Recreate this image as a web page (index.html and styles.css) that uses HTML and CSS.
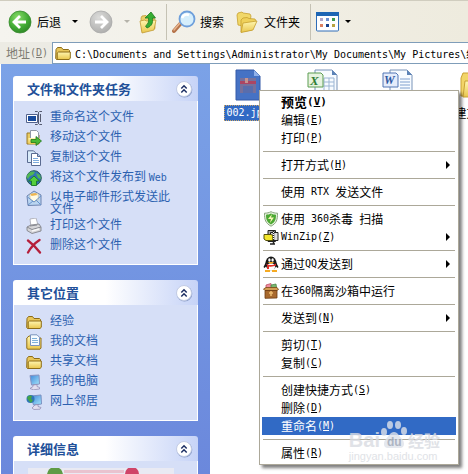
FILE: index.html
```html
<!DOCTYPE html>
<html lang="zh-CN">
<head>
    <meta charset="UTF-8">
    <meta name="viewport" content="width=device-width, initial-scale=1.0">
    <title>经验</title>
    <link rel="stylesheet" href="styles.css">
</head>
<body>
    <!-- shared icons -->
    <svg class="defs" width="0" height="0">
        <defs>
            <linearGradient id="yellow" x1="0" y1="0" x2="0" y2="1">
                <stop offset="0" stop-color="#fff6b0"/>
                <stop offset="1" stop-color="#e9c64c"/>
            </linearGradient>
            <radialGradient id="green" cx="0.4" cy="0.3" r="0.8">
                <stop offset="0" stop-color="#8ade6a"/>
                <stop offset="0.6" stop-color="#3fa833"/>
                <stop offset="1" stop-color="#2a7d24"/>
            </radialGradient>
            <radialGradient id="gray" cx="0.4" cy="0.3" r="0.8">
                <stop offset="0" stop-color="#dcdcda"/>
                <stop offset="1" stop-color="#a9a9a8"/>
            </radialGradient>
            <linearGradient id="screen" x1="0" y1="0" x2="1" y2="1">
                <stop offset="0" stop-color="#3f86d8"/>
                <stop offset="1" stop-color="#a5e6fb"/>
            </linearGradient>
        </defs>
        <symbol id="folder" viewBox="0 0 16 16">
            <path d="M1 4.5 2.5 2.5h4L8 4.5h5.5l1 1v8l-1 1h-12l-.8-1z" fill="#e8c65a" stroke="#8d6d18"/>
            <path d="M3.5 7h11.8v6.3l-1.3 1.2H2.2V8z" fill="url(#yellow)" stroke="#8d6d18"/>
        </symbol>
        <symbol id="chevron" viewBox="0 0 18 18">
            <circle cx="9.5" cy="9.8" r="7.8" fill="#8d9fca"/>
            <circle cx="9" cy="9" r="7.5" fill="#fff" stroke="#c3cce4"/>
            <path d="M6.3 8.5 9 5.8l2.7 2.7M6.3 12.5 9 9.8l2.7 2.7" fill="none" stroke="#1d2f63" stroke-width="1.5"/>
        </symbol>
        <symbol id="computer" viewBox="0 0 16 16">
            <path d="M4 1.5 13 1l.5 9-8 1z" fill="url(#screen)" stroke="#8793c0"/>
            <path d="m7 11 4-.5v2l2.500 1v1.500l-6 .8L4 14.500l3-2z" fill="#e2dff0" stroke="#8c85ac" stroke-width=".7"/>
        </symbol>
    </svg>

    <header class="toolbar">
        <button type="button" class="tool">
            <svg width="24" height="24" viewBox="0 0 24 24"><circle cx="12" cy="12" r="11" fill="url(#green)" stroke="#3a8a30" stroke-width=".8"/><path d="M18 12H7M12 6l-6 6 6 6" fill="none" stroke="#fff" stroke-width="2.800"/></svg>
            <span>后退</span>
        </button>
        <button type="button" class="drop" aria-label="后退列表"><i class="caret"></i></button>
        <button type="button" class="tool" aria-label="前进">
            <svg width="24" height="24" viewBox="0 0 24 24"><circle cx="12" cy="12" r="11" fill="url(#gray)" stroke="#aaa" stroke-width=".8"/><path d="M6 12h11M12 6l6 6-6 6" fill="none" stroke="#fff" stroke-width="2.800"/></svg>
        </button>
        <button type="button" class="drop off" aria-label="前进列表"><i class="caret"></i></button>
        <button type="button" class="tool up" aria-label="向上">
            <svg width="20" height="24" viewBox="0 0 20 24">
                <path d="m2 8 1-2 4-.5 2 2 6-1 1 12-13 3z" fill="#ead06a" stroke="#c19a34" stroke-width=".8"/>
                <path d="m1 11 5-1 1 1 10-1-2 10-12 3z" fill="url(#yellow)" stroke="#c19a34" stroke-width=".8"/>
                <path d="M8 18c5-2 6-5 5.500-10h3L12 2 6 8h3.500c.5 4-.5 6-3 8z" fill="#36ad32" stroke="#1f7a22" stroke-width=".8"/>
            </svg>
        </button>
        <span class="divider"></span>
        <button type="button" class="tool search">
            <svg width="24" height="24" viewBox="0 0 24 24">
                <path d="m2 21 7-8" stroke="#b5734a" stroke-width="4" stroke-linecap="round"/>
                <path d="m2 20 6-7" stroke="#e8b48e" stroke-width="1.500" stroke-linecap="round"/>
                <circle cx="15" cy="9" r="7.500" fill="#d5eefc" stroke="#6e9fdb" stroke-width="1.800"/>
                <path d="M10 8c1-3 4-4 7-3" stroke="#fff" stroke-width="2.500" fill="none"/>
            </svg>
            <span>搜索</span>
        </button>
        <button type="button" class="tool folders">
            <svg width="24" height="24" viewBox="0 0 24 24">
                <path d="m2 5 1-2 4-1 1 1 7 1 1 2-2 11-11-2z" fill="#f1d869" stroke="#c79f2f" stroke-width=".8"/>
                <path d="m6 10 2-2 4-.5 2 1 6 .5 1 2-4 9-11 2z" fill="#efd15a" stroke="#c79f2f" stroke-width=".8"/>
                <path d="m8 13 14-2-4 9-12 2.500z" fill="url(#yellow)" stroke="#c79f2f" stroke-width=".8"/>
            </svg>
            <span>文件夹</span>
        </button>
        <span class="divider"></span>
        <button type="button" class="tool views" aria-label="查看">
            <svg width="24" height="20" viewBox="0 0 24 20">
                <rect x=".5" y=".5" width="22" height="18.500" rx="1" fill="#fff" stroke="#2f6db8"/>
                <path d="M0 0h23v4H0z" fill="#1e66b4"/>
                <path d="M4 6h3v3H4z" fill="#b1a6c9"/><path d="M10 6h3v3h-3z" fill="#6b8fd0"/><path d="M16 6h3v3h-3z" fill="#3e9a50"/>
                <path d="M4 12h3v3H4z" fill="#dc8060"/><path d="M10 12h3v3h-3z" fill="#16418c"/><path d="M16 12h3v3h-3z" fill="#b8a441"/>
            </svg>
            <i class="caret"></i>
        </button>
    </header>

    <div class="address-bar">
        <label for="address">地址<span class="en">(<u>D</u>)</span></label>
        <div class="address-box">
            <svg width="16" height="16"><use href="#folder"/></svg>
            <input type="text" id="address" value="C:\Documents and Settings\Administrator\My Documents\My Pictures\经验">
        </div>
    </div>

    <main class="content">
        <aside class="sidebar">
            <section class="panel">
                <div class="panel-head">
                    <h2>文件和文件夹任务</h2>
                    <button type="button" aria-label="折叠"><svg width="18" height="18"><use href="#chevron"/></svg></button>
                </div>
                <ul class="links">
                    <li><svg width="16" height="16" viewBox="0 0 16 16"><path d="M.5 4.500h11v8H.5z" fill="#fff" stroke="#52628c"/><path d="M2 6h8v5H2z" fill="#174a9c"/><path d="M9 1.500h2.500l1 1 1-1H16M9 14.500h2.500l1-1 1 1H16M12.500 2v12M14.500 4v8" fill="none" stroke="#555b70"/></svg><a href="#">重命名这个文件</a></li>
                    <li><svg width="16" height="16" viewBox="0 0 16 16"><path d="M1 3h5l1 2h6v9H1z" fill="#e9cb62" stroke="#9a7a28"/><path d="M4.500.5h6l2 2v6h-8z" fill="#fff" stroke="#9098a8"/><path d="M2.500 8h11v6h-11z" fill="url(#yellow)"/><path d="M5 9.500h5V6.500l5.500 4.500-5.500 4.500v-3H5z" fill="#49b936" stroke="#21771b" stroke-width=".8"/></svg><a href="#">移动这个文件</a></li>
                    <li><svg width="16" height="16" viewBox="0 0 16 16"><path d="M1.500.8h6l2 2v9.700h-8z" fill="#d9ebfa" stroke="#5a6b91"/><path d="M5.500 3.500h6l3 3v9h-9z" fill="#fff" stroke="#5a6b91"/><path d="M7 8.500h5M7 10.500h6M7 12.500h6" stroke="#7dabdc"/><path d="M11.500 3.500v3h3" fill="#a7c7ef" stroke="#5a6b91"/></svg><a href="#">复制这个文件</a></li>
                    <li><svg width="16" height="16" viewBox="0 0 16 16"><circle cx="8" cy="8" r="7.300" fill="#3272b8" stroke="#265b54"/><path d="M2 4c2-3 6-3 7-2l-2 3-3 1-2 3C0 7 1 5 2 4zM10 3l4 2 1 4-3-1z" fill="#51b753"/><path d="m8 6 5.500 5h-3v4.500h-5V11h-3z" fill="#55cf3c" stroke="#147221" stroke-width=".8"/></svg><a href="#">将这个文件发布到 <span class="en">Web</span></a></li>
                    <li class="two-lines"><svg width="16" height="16" viewBox="0 0 16 16"><path d="m1 6 7-5 7 4v10l-13 .5z" fill="#b9d5f2" stroke="#6d83af"/><path d="m4 4 8-.5.5 6L8 12 4 9z" fill="#fffbe4" stroke="#c7b98e" stroke-width=".6"/><path d="m4.500 4 5-1 2 2-6 1z" fill="#efb54e"/><path d="m1.500 7 6.500 5 7-6M2 15l5-4M15 15l-5-5" fill="none" stroke="#6a94cd"/></svg><a href="#">以电子邮件形式发送此文件</a></li>
                    <li><svg width="16" height="16" viewBox="0 0 16 16"><path d="m4 1 6-1 2 7-7 2z" fill="#fff" stroke="#a4a6b0" stroke-width=".8"/><path d="m1 9 4-2 8-1 2 3v4l-9 2.500-5-3z" fill="#d5d5d8" stroke="#77787f" stroke-width=".8"/><path d="m1 9 5 2.500L15 9M4 8l7-1" fill="none" stroke="#888a92"/><path d="m6 13 7-2" stroke="#f8f8f8" stroke-width="1.500"/></svg><a href="#">打印这个文件</a></li>
                    <li><svg width="16" height="16" viewBox="0 0 16 16"><path d="M2 2.500c4 3 8 7 12 12M13.500 2C9 5 5 9 2 14.500" fill="none" stroke="#b51f3b" stroke-width="2.300" stroke-linecap="round"/></svg><a href="#">删除这个文件</a></li>
                </ul>
            </section>

            <section class="panel">
                <div class="panel-head">
                    <h2>其它位置</h2>
                    <button type="button" aria-label="折叠"><svg width="18" height="18"><use href="#chevron"/></svg></button>
                </div>
                <ul class="links">
                    <li><svg width="16" height="16"><use href="#folder"/></svg><a href="#">经验</a></li>
                    <li><svg width="16" height="16" viewBox="0 0 16 16"><path d="M.8 4 3 2h3l2 2h7v10l-1 1.200H1.500L.8 14z" fill="url(#yellow)" stroke="#8d6d18"/><path d="M4.500.8h6.500l2.500 2.500v8.200h-9z" fill="#f6fbff" stroke="#7b93bd"/><path d="M6 4.500h5M6 6.500h6M6 8.500h6" stroke="#7eb1d9"/></svg><a href="#">我的文档</a></li>
                    <li><svg width="16" height="16"><use href="#folder"/></svg><a href="#">共享文档</a></li>
                    <li><svg width="16" height="16"><use href="#computer"/></svg><a href="#">我的电脑</a></li>
                    <li><svg width="16" height="16" viewBox="0 0 16 16"><path d="m5 2 10-1 .5 9-8 1z" fill="url(#screen)" stroke="#7b91c2"/><path d="m9 11 3-.5v2l3 1-1 1.700-6 .3-2-1.500z" fill="#e2dff0" stroke="#8c85ac" stroke-width=".7"/><circle cx="4.500" cy="5" r="4" fill="#2e75b7"/><path d="M1 4c1-3 4-3 5-2L5 5l2 1-2 3-2-2z" fill="#43a447"/></svg><a href="#">网上邻居</a></li>
                </ul>
            </section>

            <section class="panel">
                <div class="panel-head">
                    <h2>详细信息</h2>
                    <button type="button" aria-label="折叠"><svg width="18" height="18"><use href="#chevron"/></svg></button>
                </div>
                <div class="preview">
                    <svg width="146" height="40" viewBox="0 0 146 40"><path d="M0 0h146v40H0z" fill="#e9eaf3"/><circle cx="27" cy="7" r="8" fill="#5f9b45"/><path d="M36 2h60v3H36z" fill="#e9c3cf"/><circle cx="104" cy="6" r="7" fill="#d04468"/></svg>
                </div>
            </section>
        </aside>

        <ul class="files">
            <li class="selected">
                <svg width="26" height="32" viewBox="0 0 26 32"><path d="M1 1h18l6 6v24H1z" fill="#4672c4" stroke="#345aa8"/><path d="M19 1v6h6z" fill="#8fb0ea"/><path d="M5 9h16v15H5z" fill="#77709b"/><path d="M5 12h16v3H5z" fill="#ac4563"/><path d="M8 17h10v7H8z" fill="#596dac"/><path d="M10 9h3v5h-3z" fill="#c69490"/></svg>
                <span class="en">002.jpg</span>
            </li>
            <li>
                <svg width="32" height="32" viewBox="0 0 32 32"><path d="M8 1h17l5 5v25H8z" fill="#f7fbff" stroke="#7893b8"/><path d="M25 1v5h5z" fill="#5c83b7"/><path d="M17 9h10v14H17zM17 13h10M17 17h10M22 9v14" fill="none" stroke="#9bb5d4"/><path d="M1 4h13l2 2v12H1z" fill="#e6f3df" stroke="#5d9d53"/><text x="3" y="16" class="xls">X</text></svg>
            </li>
            <li>
                <svg width="32" height="32" viewBox="0 0 32 32"><path d="M8 1h17l5 5v25H8z" fill="#f7fbff" stroke="#7893b8"/><path d="M25 1v5h5z" fill="#5c83b7"/><path d="M18 10h10M18 13h10M18 16h10M18 19h10" stroke="#7f9fce"/><path d="M1 4h13l2 2v12H1z" fill="#e4ecfb" stroke="#5277b5"/><text x="2" y="15" class="doc">W</text></svg>
            </li>
            <li>
                <svg width="32" height="32" viewBox="0 0 16 16"><path d="M2 4.500 3 2h5l1 1.500h5l1 1v9H2z" fill="#f2d569" stroke="#c9a136" stroke-width=".5"/><path d="M4 6h11v8H3z" fill="url(#yellow)" stroke="#c9a136" stroke-width=".5"/></svg>
                <span>新建文件夹</span>
            </li>
        </ul>
    </main>

    <ul class="menu">
        <li><button type="button" class="default">预览<span class="en">(<u>V</u>)</span></button></li>
        <li><button type="button">编辑<span class="en">(<u>E</u>)</span></button></li>
        <li><button type="button">打印<span class="en">(<u>P</u>)</span></button></li>
        <li class="line"></li>
        <li><button type="button" class="more">打开方式<span class="en">(<u>H</u>)</span></button></li>
        <li class="line"></li>
        <li><button type="button">使用<span class="en"> RTX </span>发送文件</button></li>
        <li class="line"></li>
        <li><button type="button"><svg width="16" height="16" viewBox="0 0 16 16"><path d="M8 .7c2 1 4 1.500 6.500 1.500 0 7-1 10-6.500 13C2.500 12 1.500 9 1.500 2.200 4 2.200 6 1.700 8 .7z" fill="#e7f2df" stroke="#86a37a"/><path d="M8 2.500c1.500.8 3 1.200 5 1.200 0 5-1 7.300-5 9.800-4-2.500-5-4.800-5-9.800 2 0 3.500-.4 5-1.200z" fill="#4ba832"/><path d="m9 3-4 5h3l-1 4 4-5.500H8z" fill="#f8f5b5"/></svg>使用<span class="en"> 360</span>杀毒<span class="en"> </span>扫描</button></li>
        <li><button type="button" class="more"><svg width="16" height="16" viewBox="0 0 16 16"><path d="M5 1.500h7.500v11H5z" fill="#a9a9a9" stroke="#222"/><path d="M7.500 3.500H15v8H7.500z" fill="#ddd" stroke="#222"/><path d="M1 5.500h7l2 1v5H3L1 10z" fill="#f3e62c" stroke="#55500a"/><path d="M10.500 1v14M7 15h5" stroke="#222" stroke-width="1.500"/><path d="M10.500 3v8" stroke="#fff" stroke-dasharray="1 1"/></svg><span class="en">WinZip(<u>Z</u>)</span></button></li>
        <li class="line"></li>
        <li><button type="button" class="more"><svg width="16" height="16" viewBox="0 0 16 16"><path d="M3 6 .5 11l1 1 2-2zM13 6l2.500 5-1 1-2-2z" fill="#161616"/><ellipse cx="8" cy="7.500" rx="5.500" ry="7" fill="#161616"/><ellipse cx="8" cy="11" rx="4" ry="3.700" fill="#fff"/><ellipse cx="6.400" cy="4" rx="1.200" ry="1.700" fill="#fff"/><ellipse cx="9.600" cy="4" rx="1.200" ry="1.700" fill="#fff"/><path d="M4.500 6h7L8 8z" fill="#f5aa22"/><path d="M3 7.500c3 2 7 2 10 0v2c-2 1-5 1.500-7 1v2.500H4V9.500z" fill="#e0302a"/><path d="M2 14h5v2H2zM9 14h5v2H9z" fill="#f5aa22"/></svg>通过<span class="en">QQ</span>发送到</button></li>
        <li class="line"></li>
        <li><button type="button"><svg width="16" height="16" viewBox="0 0 16 16"><path d="M3 2 8 .5l1 6H3z" fill="#ef8ea0" stroke="#b64457" stroke-width=".7"/><path d="m8 2 5-1 1 6H8z" fill="#78b66e" stroke="#427c3c" stroke-width=".7"/><path d="M.5 6 3 4.500h11l1.500 2-1.500 1H2z" fill="#d39d53" stroke="#794613" stroke-width=".8"/><path d="M2 7.500h12V15l-12 .3z" fill="#a8692e" stroke="#6c3b12" stroke-width=".8"/><path d="M6 10h4M8 8v5" stroke="#edbd70" stroke-width="1.500"/></svg>在<span class="en">360</span>隔离沙箱中运行</button></li>
        <li class="line"></li>
        <li><button type="button" class="more">发送到<span class="en">(<u>N</u>)</span></button></li>
        <li class="line"></li>
        <li><button type="button">剪切<span class="en">(<u>T</u>)</span></button></li>
        <li><button type="button">复制<span class="en">(<u>C</u>)</span></button></li>
        <li class="line"></li>
        <li><button type="button">创建快捷方式<span class="en">(<u>S</u>)</span></button></li>
        <li><button type="button">删除<span class="en">(<u>D</u>)</span></button></li>
        <li><button type="button" class="active">重命名<span class="en">(<u>M</u>)</span></button></li>
        <li class="line"></li>
        <li><button type="button">属性<span class="en">(<u>R</u>)</span></button></li>
    </ul>

    <div class="watermark">
        <div class="brand">
            <span>Bai</span>
            <svg width="28" height="30" viewBox="0 0 28 30"><ellipse cx="4" cy="12" rx="3" ry="4"/><ellipse cx="10" cy="5" rx="3" ry="4"/><ellipse cx="18" cy="5" rx="3" ry="4"/><ellipse cx="24" cy="11" rx="3" ry="4"/><path d="M14 12c4 0 5 4 8 7s3 9-2 9H8c-5 0-5-6-2-9s4-7 8-7z"/><text x="7" y="26">du</text></svg>
            <span class="cn">经验</span>
        </div>
        <small>jingyan.baidu.com</small>
    </div>
</body>
</html>
```
FILE: styles.css
```css
* {
    margin: 0;
    padding: 0;
    box-sizing: border-box;
}

body {
    position: relative;
    display: flex;
    flex-direction: column;
    height: 100vh;
    overflow: hidden;
    font-family: "Noto Sans CJK SC", sans-serif;
    font-size: 12px;
    line-height: 12px;
    color: #000;
    background-color: #fff;
}

ul {
    list-style: none;
}

button {
    font: inherit;
    color: inherit;
    background: none;
    border: none;
}

svg {
    display: block;
    flex: none;
}

.defs {
    position: absolute;
}

.en {
    font-family: "DejaVu Sans Mono", monospace;
    font-size: 10px;
    white-space: pre;
}

/* toolbar */
.toolbar {
    display: flex;
    flex: none;
    align-items: center;
    height: 42px;
    padding-left: 8px;
    border-top: 1px solid #d0cdbf;
    background: linear-gradient(to right, #f5f4ef, #eeebde);
}

.tool {
    display: flex;
    align-items: center;
    gap: 5px;
}

.drop {
    width: 28px;
    height: 24px;
    padding-left: 11px;
}

.caret {
    display: block;
    border: 3px solid transparent;
    border-top-color: #000;
    border-bottom: none;
    width: 6px;
}

.off .caret {
    border-top-color: #b5b3aa;
}

.up {
    margin-left: -2px;
}

.divider {
    width: 1px;
    height: 36px;
    margin: 0 5px 0 7px;
    background-color: #c5c2b4;
}

.search {
    gap: 4px;
}

.folders {
    margin-left: 11px;
}

.folders + .divider {
    margin-left: 10px;
}

/* address */
.address-bar {
    display: flex;
    flex: none;
    height: 22px;
    background-color: #ecebe4;
}

.address-bar label {
    display: flex;
    align-items: center;
    width: 52px;
    padding-left: 6px;
    color: #7d7b72;
}

.address-box {
    display: flex;
    flex: 1;
    align-items: center;
    gap: 4px;
    min-width: 0;
    padding-left: 2px;
    border: 1px solid #7f9db9;
    border-right: none;
    background-color: #fff;
}

.address-box input {
    flex: 1;
    min-width: 0;
    height: 18px;
    border: none;
    outline: none;
    background: none;
    font-family: "DejaVu Sans Mono", "Noto Sans CJK SC", monospace;
    font-size: 10px;
}

/* main area */
.content {
    display: flex;
    flex: 1;
    min-height: 0;
}

.sidebar {
    flex: none;
    width: 209px;
    margin-left: 1px;
    padding: 12px 12px 0;
    overflow: hidden;
    background: linear-gradient(#7ba2e7, #6b88dc);
}

.panel {
    margin-bottom: 15px;
}

.panel-head {
    display: flex;
    align-items: center;
    justify-content: space-between;
    height: 25px;
    padding: 0 5px 0 14px;
    border-radius: 3px 3px 0 0;
    background: linear-gradient(to right, #fff 50%, #c6d3f7);
}

.panel-head h2 {
    font-size: 13px;
    line-height: 16px;
    color: #215099;
}

.links {
    padding: 5px 24px 10px 12px;
    border: 1px solid #fff;
    border-top: none;
    background-color: #d6dff7;
}

.links li {
    display: flex;
    gap: 8px;
    padding: 4px 0;
}

.links li.two-lines {
    padding-bottom: 0;
}

.links svg {
    margin-bottom: -4px;
}

.links a {
    color: #2b61b0;
    text-decoration: none;
}

.links .en {
    line-height: 8px;
}

.preview {
    padding: 7px 14px;
    border: 1px solid #fff;
    border-top: none;
    background-color: #d6dff7;
}

.files {
    display: grid;
    flex: 1;
    grid-template-columns: repeat(4, 75px);
    min-width: 0;
    padding-top: 5px;
    overflow: hidden;
}

.files li {
    display: flex;
    flex-direction: column;
    align-items: center;
    gap: 4px;
}

.files span {
    padding: 2px;
    white-space: nowrap;
}

.files .selected span {
    color: #fff;
    background-color: #316ac5;
    outline: 1px dotted #c9a56a;
    outline-offset: -1px;
}

.xls,
.doc {
    font: italic bold 13px "Liberation Serif", serif;
    fill: #2f7d35;
}

.doc {
    font-size: 12px;
    fill: #2c559f;
}

/* context menu */
.menu {
    position: absolute;
    top: 90px;
    left: 259px;
    width: 200px;
    padding: 2px;
    border: 1px solid #aca899;
    background-color: #fff;
    box-shadow: 3px 3px 3px rgba(0, 0, 0, 0.5);
}

.menu button {
    display: flex;
    align-items: center;
    width: 100%;
    height: 18px;
    padding-left: 19px;
    text-align: left;
    white-space: nowrap;
}

.menu svg {
    margin: 0 2px 0 -18px;
}

.menu .default {
    font-weight: bold;
    font-size: 13px;
}

.menu .default .en {
    font-size: 11px;
}

.menu .active {
    color: #fff;
    background-color: #316ac5;
}

.menu .more::after {
    content: "";
    margin-left: auto;
    margin-right: 6px;
    border: 4px solid transparent;
    border-left-color: #000;
    border-right: none;
}

.menu .line {
    height: 1px;
    margin: 4px 1px;
    background-color: #aca899;
}

/* site mark over the menu */
.watermark {
    position: absolute;
    right: 28px;
    bottom: 12px;
    color: #d9dce2;
    font-family: "Liberation Sans", sans-serif;
    opacity: 0.8;
    pointer-events: none;
}

.brand {
    display: flex;
    align-items: flex-end;
    font-size: 20px;
    font-weight: bold;
    line-height: 20px;
}

.brand svg {
    fill: #dfe3ea;
}

.brand text {
    font-size: 12px;
    fill: #9aa3b5;
}

.brand .cn {
    font-family: "Noto Sans CJK SC", sans-serif;
    font-size: 16px;
}

.watermark small {
    display: block;
    font-size: 11px;
    line-height: 12px;
}
```
